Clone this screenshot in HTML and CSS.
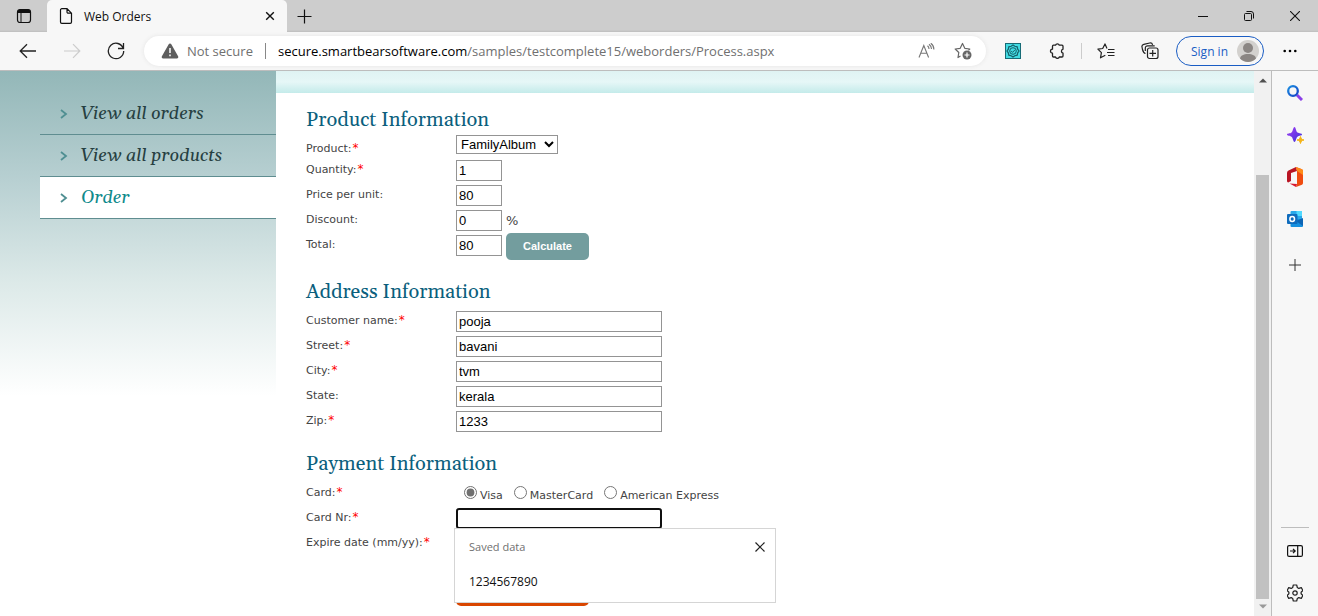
FILE: index.html
```html
<!DOCTYPE html>
<html lang="en">
<head>
<meta charset="utf-8">
<title>Web Orders</title>
<link rel="stylesheet" href="styles.css">
</head>
<body>
<div class="browser">
  <header class="tabstrip">
    <button class="tab-actions" aria-label="Tab actions"><svg width="16" height="16" viewBox="0 0 16 16"><rect x="1.5" y="1.5" width="13" height="13" rx="2.5" fill="none" stroke="#111" stroke-width="1.2"/><path d="M1.5 5V4a2.5 2.5 0 0 1 2.5-2.500h8A2.500 2.500 0 0 1 14.500 4v1z" fill="#111"/><path d="M5 5v9.500" stroke="#111"/></svg></button>
    <div class="tab">
      <svg width="14" height="16" viewBox="0 0 14 16"><path d="M1.500 2a1.300 1.300 0 0 1 1.300-1.300H8L12.500 5.200V14a1.300 1.300 0 0 1-1.300 1.300H2.800A1.300 1.300 0 0 1 1.500 14zM8 .7V4a1.200 1.200 0 0 0 1.200 1.200h3.300" fill="none" stroke="#111" stroke-width="1.2"/></svg>
      <span class="tab-title">Web Orders</span>
      <button class="tab-close" aria-label="Close tab"><svg width="10" height="10" viewBox="0 0 10 10"><path d="M1.200 1.200l7.600 7.600M8.800 1.200L1.200 8.800" stroke="#111" stroke-width="1.400"/></svg></button>
    </div>
    <button class="new-tab" aria-label="New tab"><svg width="15" height="15" viewBox="0 0 15 15"><path d="M7.500 .5v14M.5 7.500h14" stroke="#111" stroke-width="1.200"/></svg></button>
    <div class="window-controls">
      <button aria-label="Minimize"><svg width="10" height="10" viewBox="0 0 10 10"><path d="M0 5.500h10" stroke="#111"/></svg></button>
      <button aria-label="Restore"><svg width="10" height="10" viewBox="0 0 10 10"><rect x=".5" y="2.500" width="7" height="7" rx="1" fill="none" stroke="#111"/><path d="M2.500 .5H7A2.500 2.500 0 0 1 9.500 3v4.500" fill="none" stroke="#111"/></svg></button>
      <button aria-label="Close"><svg width="10" height="10" viewBox="0 0 10 10"><path d="M0 0l10 10M10 0L0 10" stroke="#111" stroke-width="1.100"/></svg></button>
    </div>
  </header>

  <div class="toolbar">
    <button class="tool" aria-label="Back"><svg width="18" height="16" viewBox="0 0 18 16"><path d="M17 8H1.500M8 1.200L1.200 8 8 14.800" fill="none" stroke="#222" stroke-width="1.300"/></svg></button>
    <button class="tool" aria-label="Forward"><svg width="18" height="16" viewBox="0 0 18 16"><path d="M1 8h15.500M10 1.200L16.800 8 10 14.800" fill="none" stroke="#ccc" stroke-width="1.200"/></svg></button>
    <button class="tool" aria-label="Refresh"><svg width="18" height="18" viewBox="0 0 18 18"><path d="M16.300 6.500A7.700 7.700 0 1 0 16.700 9M16.500 1v5.500H11" fill="none" stroke="#222" stroke-width="1.300"/></svg></button>
    <div class="address">
      <svg width="18" height="16" viewBox="0 0 18 16"><path d="M9 .5c.6 0 1 .3 1.300.8l6.800 12c.6 1-.1 2.200-1.200 2.200H2.100c-1.100 0-1.800-1.200-1.200-2.200l6.800-12C8 .8 8.400.5 9 .5z" fill="#5e5e5e"/><path d="M9 5v5M9 11.500v1.700" stroke="#fff" stroke-width="1.500"/></svg>
      <span class="not-secure">Not secure</span>
      <span class="url"><b>secure.smartbearsoftware.com</b>/samples/testcomplete15/weborders/Process.aspx</span>
      <button class="in-address" aria-label="Read aloud"><svg width="18" height="16" viewBox="0 0 18 16"><path d="M1 14.500L5.800 2.500l4.800 12M2.700 10.300h6.200M9.500 2.800c1 .8 1.500 2 1.500 3.200M11 1.200c1.700 1.200 2.500 3 2.500 4.800M12.800.2C15 1.800 15.900 4 15.900 6.500" fill="none" stroke="#777" stroke-width="1.100"/></svg></button>
      <button class="in-address" aria-label="Add to favorites"><svg width="18" height="18" viewBox="0 0 18 18"><path d="M6.500 14.100L4 15.500l.8-5L1.200 7l5-.7L8.500 1.500l2.300 4.800 5 .7-1.300 1.300" fill="none" stroke="#666" stroke-width="1.200" stroke-linejoin="round"/><circle cx="13" cy="13" r="4.500" fill="#666"/><path d="M13 10.500v5M10.500 13h5" stroke="#fff" stroke-width="1.200"/></svg></button>
    </div>
    <button class="tool first-ext" aria-label="Extension"><svg width="16" height="16" viewBox="0 0 16 16"><rect x=".5" y=".5" width="15" height="15" fill="#42dbe2" stroke="#176b76"/><path d="M8 2l1.800 1.300 2.400.5.500 2.400L14 8l-1.300 1.800-.5 2.400-2.400.5L8 14l-1.800-1.300-2.400-.5-.5-2.400L2 8l1.300-1.800.5-2.400 2.400-.5z" fill="none" stroke="#17616c" stroke-width="1.200"/><circle cx="8" cy="8" r="3.300" fill="none" stroke="#17616c"/><path d="M6.200 8l1.300 1.400L10 6.800" fill="none" stroke="#17616c"/></svg></button>
    <button class="tool" aria-label="Extensions"><svg width="16" height="16" viewBox="0 0 16 16"><path d="M4.500 2.200h2A2 2 0 0 1 10.300 2.200H13q1 0 1 1V6.200a2 2 0 0 0 0 3.900V13q0 1-1 1h-2.700a2 2 0 0 1-3.800 0H4.500q-1 0-1-1v-2.800a2 2 0 1 1 0-4V3.200q0-1 1-1z" fill="none" stroke="#222" stroke-width="1.300" stroke-linejoin="round"/></svg></button>
    <span class="tool-divider"></span>
    <button class="tool" aria-label="Favorites"><svg width="18" height="16" viewBox="0 0 18 16"><path d="M10 5.500L8 .9 5.700 5.500.9 6.200 4.400 9.700l-.9 5.100 4.800-2.500M11 6.500h6.500M10 9.500h7.500M11 12.500h6.500" fill="none" stroke="#222" stroke-width="1.200" stroke-linejoin="round"/></svg></button>
    <button class="tool" aria-label="Collections"><svg width="18" height="18" viewBox="0 0 18 18"><rect x="6.500" y="6" width="10.500" height="10.500" rx="2" fill="none" stroke="#222" stroke-width="1.200"/><path d="M11.700 8v6.500M8.500 11.300H15M4.500 11.500C2.500 11 2 9.500 1.500 7.500L1 5c-.3-1.500.5-2.400 1.800-2.700L8.700 1c1.500-.3 2.500.3 2.900 1.800M4.300 9V6.200C4.300 4.700 5.300 3.800 6.700 3.800h7" fill="none" stroke="#222" stroke-width="1.200"/></svg></button>
    <button class="sign-in">Sign in <svg width="22" height="22" viewBox="0 0 22 22"><circle cx="11" cy="11" r="11" fill="#d3d1ce"/><circle cx="11" cy="8" r="5" fill="#8b8683"/><path d="M3 18.500c.5-3 3.500-4.500 8-4.500s7.500 1.500 8 4.500a11 11 0 0 1-16 0z" fill="#8b8683"/></svg></button>
    <button class="tool" aria-label="Settings and more"><svg width="14" height="4" viewBox="0 0 14 4"><circle cx="1.700" cy="2" r="1.300"/><circle cx="7" cy="2" r="1.300"/><circle cx="12.300" cy="2" r="1.300"/></svg></button>
  </div>

  <div class="workspace">
    <div class="page">
      <nav class="menu">
        <ul>
          <li><a href="#"><svg width="8" height="10" viewBox="0 0 8 10"><path d="M1 1l5 4-5 4" fill="none" stroke="#4f8f92" stroke-width="1.800"/></svg>View all orders</a></li>
          <li><a href="#"><svg width="8" height="10" viewBox="0 0 8 10"><path d="M1 1l5 4-5 4" fill="none" stroke="#4f8f92" stroke-width="1.800"/></svg>View all products</a></li>
          <li class="current"><a href="#"><svg width="8" height="10" viewBox="0 0 8 10"><path d="M1 1l5 4-5 4" fill="none" stroke="#4f8f92" stroke-width="1.800"/></svg>Order</a></li>
        </ul>
      </nav>
      <main class="content">
        <div class="band"></div>
        <form class="order">
          <section class="product">
            <h2>Product Information</h2>
            <div class="row select-row"><label for="product">Product:<em>*</em></label><div class="field"><select id="product"><option>FamilyAlbum</option></select></div></div>
            <div class="row"><label for="qty">Quantity:<em>*</em></label><div class="field"><input class="short" id="qty" type="text" value="1"></div></div>
            <div class="row"><label for="price">Price per unit:</label><div class="field"><input class="short" id="price" type="text" value="80"></div></div>
            <div class="row"><label for="discount">Discount:</label><div class="field"><input class="short" id="discount" type="text" value="0"><span class="percent">%</span></div></div>
            <div class="row"><label for="total">Total:</label><div class="field"><input class="short" id="total" type="text" value="80"><button type="button" class="calculate">Calculate</button></div></div>
          </section>
          <section class="address-info">
            <h2>Address Information</h2>
            <div class="row"><label for="name">Customer name:<em>*</em></label><div class="field"><input id="name" type="text" value="pooja"></div></div>
            <div class="row"><label for="street">Street:<em>*</em></label><div class="field"><input id="street" type="text" value="bavani"></div></div>
            <div class="row"><label for="city">City:<em>*</em></label><div class="field"><input id="city" type="text" value="tvm"></div></div>
            <div class="row"><label for="state">State:</label><div class="field"><input id="state" type="text" value="kerala"></div></div>
            <div class="row"><label for="zip">Zip:<em>*</em></label><div class="field"><input id="zip" type="text" value="1233"></div></div>
          </section>
          <section class="payment">
            <h2>Payment Information</h2>
            <div class="row"><span class="caption">Card:<em>*</em></span><div class="field cards">
              <input type="radio" name="card" id="visa" checked><label for="visa">Visa</label>
              <input type="radio" name="card" id="mc"><label for="mc">MasterCard</label>
              <input type="radio" name="card" id="amex"><label for="amex">American Express</label>
            </div></div>
            <div class="row"><label for="cardnr">Card Nr:<em>*</em></label><div class="field">
              <input class="focused" id="cardnr" type="text">
              <div class="autofill">
                <div class="autofill-head">Saved data<button type="button" aria-label="Close suggestions"><svg width="10" height="10" viewBox="0 0 10 10"><path d="M.5 .5l9 9M9.500 .5l-9 9" stroke="#222" stroke-width="1.200"/></svg></button></div>
                <div class="suggestion">1234567890</div>
              </div>
            </div></div>
            <div class="row"><span class="caption">Expire date (mm/yy):<em>*</em></span></div>
          </section>
          <button type="button" class="process" aria-label="Submit order"></button>
        </form>
      </main>
    </div>
    <div class="scrollbar">
      <svg width="8" height="5" viewBox="0 0 8 5"><path d="M0 4.500L4 .5l4 4z" fill="#505050"/></svg>
      <div class="track"><div class="thumb"></div></div>
      <svg width="8" height="5" viewBox="0 0 8 5"><path d="M0 .5h8l-4 4z" fill="#999"/></svg>
    </div>
    <aside class="sidebar">
      <button aria-label="Search"><svg width="16" height="16" viewBox="0 0 16 16"><defs><linearGradient id="lens" x1="0" y1="0" x2="1" y2="1"><stop offset="0" stop-color="#1b8de0"/><stop offset="1" stop-color="#1443c8"/></linearGradient></defs><path d="M10 10l5 5" stroke="#8b3fe8" stroke-width="3"/><circle cx="6" cy="6" r="4.800" fill="none" stroke="url(#lens)" stroke-width="2.300"/></svg></button>
      <button aria-label="Discover"><svg width="18" height="18" viewBox="0 0 18 18"><defs><linearGradient id="spark" x1="0" y1="0" x2="1" y2="1"><stop offset="0" stop-color="#a53df5"/><stop offset="1" stop-color="#3a35d8"/></linearGradient></defs><path d="M8.500 1c1.400 0 1.400 4.500 3 5.600S16 7.300 16 8.500s-3 1-4.500 2.300-1.600 5.200-3 5.200-1.500-4-3-5.200S1 9.700 1 8.500s3-.8 4.500-2S7.100 1 8.500 1z" fill="url(#spark)"/><path d="M14.500 10.500c.6 2.400 1.100 2.900 3.500 3.500-2.400.6-2.900 1.100-3.500 3.500-.6-2.400-1.100-2.900-3.500-3.500 2.400-.6 2.900-1.100 3.500-3.500z" fill="#f5b416" stroke="#f5b416"/></svg></button>
      <button aria-label="Microsoft 365"><svg width="16" height="20" viewBox="0 0 16 20"><path d="M9 0L1.500 3.500Q0 4.300 0 6v8q0 1.200 1.200 1.500L4 14V6l6-2z" fill="#b91524"/><path d="M9 0l6 2.300Q16 2.800 16 4v12q0 1.200-1 1.700L9 20l1-3V4z" fill="#f04c10"/><path d="M9 0l6 2.300Q16 2.800 16 4v4l-6-4z" fill="#ff8b18"/><path d="M2.500 16.500L10 17l-1 3z" fill="#d81b30"/></svg></button>
      <button aria-label="Outlook"><svg width="16" height="16" viewBox="0 0 16 16"><path d="M4.500 0H14q1 0 1 1v8H3.500V1q0-1 1-1z" fill="#28a8ea"/><path d="M9.500 0H15v5H9.500z" fill="#50d9ff"/><path d="M3.500 8H16v7q0 1-1 1H4.500q-1 0-1-1z" fill="#1590df"/><path d="M16 7v8L9 10z" fill="#0d65b5"/><rect y="3" width="10.500" height="10" rx="1" fill="#0f6cbd"/><ellipse cx="5.200" cy="8" rx="2.300" ry="2.500" fill="none" stroke="#fff" stroke-width="1.500"/></svg></button>
      <button class="add" aria-label="Customize"><svg width="12" height="12" viewBox="0 0 12 12"><path d="M6 0v12M0 6h12" stroke="#333"/></svg></button>
      <hr>
      <button aria-label="Hide sidebar"><svg width="16" height="12" viewBox="0 0 16 12"><rect x=".6" y=".6" width="14.800" height="10.800" rx="1.500" fill="none" stroke="#111" stroke-width="1.200"/><path d="M10.700 .5v11M3 6h5M6 3.800L8.200 6 6 8.200" fill="none" stroke="#111" stroke-width="1.200"/></svg></button>
      <button aria-label="Settings"><svg width="16" height="18" viewBox="0 0 16 18"><path d="M6.300 1h3.400l.6 2.500 1.500.9 2.500-.8 1.600 2.900-1.800 1.700v1.600l1.800 1.700-1.600 2.900-2.500-.8-1.500.9-.6 2.500H6.300l-.6-2.500-1.500-.9-2.500.8L.1 11.500l1.800-1.700V8.200L.1 6.500l1.600-2.900 2.500.8 1.500-.9z" fill="none" stroke="#222" stroke-width="1.200" stroke-linejoin="round"/><circle cx="8" cy="9" r="2.200" fill="none" stroke="#222" stroke-width="1.200"/></svg></button>
    </aside>
  </div>
</div>
</body>
</html>
```
FILE: styles.css
```css
* { box-sizing: border-box; }
body { margin: 0; font-family: "Open Sans", "Noto Sans", sans-serif; font-size: 12px; color: #111; background: #fff; }
button { padding: 0; border: 0; background: none; font: inherit; }
svg { display: block; flex: none; }
.browser { height: 100vh; display: flex; flex-direction: column; overflow: hidden; background: #f7f7f7; }

/* Tab strip */
.tabstrip { display: flex; height: 32px; background: linear-gradient(#cdcdcd 30px, #bdbdbd 32px); }
.tabstrip button { display: flex; align-items: center; justify-content: center; }
.tab-actions { width: 47px; }
.tab { display: flex; align-items: center; gap: 11px; width: 240px; padding: 0 12px; background: #f7f7f7; border-radius: 5px 5px 0 0; }
.tab-title { flex: 1; }
.new-tab { width: 35px; }
.window-controls { display: flex; margin-left: auto; }
.window-controls button { width: 46px; }

/* Toolbar */
.toolbar { display: flex; align-items: center; height: 39px; padding: 0 6px; border-bottom: 1px solid #bdbdbd; }
.tool { display: flex; align-items: center; justify-content: center; width: 44px; height: 30px; }
.address { flex: 1; display: flex; align-items: center; min-width: 0; height: 30px; margin-left: 6px; padding: 0 5px 0 17px; border-radius: 15px; background: #fff; box-shadow: 0 0 4px #e4e4e4; font-size: 13px; color: #707070; }
.not-secure { margin-left: 8px; padding-right: 12px; border-right: 1px solid #888; line-height: 16px; }
.url { flex: 1; margin-left: 12px; white-space: nowrap; overflow: hidden; }
.url b { font-weight: 400; color: #000; }
.in-address { display: flex; justify-content: center; width: 36px; }
.first-ext { margin-left: 5px; }
.tool-divider { width: 1px; height: 16px; margin: 0 2px; background: #ccc; }
.sign-in { display: flex; align-items: center; justify-content: space-between; width: 88px; height: 30px; margin: 0 4px; padding: 0 4px 0 14px; border: 1px solid #1a5dc4; border-radius: 15px; color: #1a5dc4; }

/* Workspace */
.workspace { flex: 1; display: flex; min-height: 0; }
.page { flex: 1; display: flex; min-width: 0; overflow: hidden; background: #fff; }
.menu { width: 276px; padding: 22px 0 0 40px; background: linear-gradient(#93b7b8, #b8d0d2 110px, #dce9e8 210px, #fff 325px); }
.menu ul { margin: 0; padding: 0; list-style: none; }
.menu li { border-bottom: 1px solid #5f8d90; }
.menu a { display: flex; align-items: center; gap: 13px; height: 41px; padding-left: 20px; font: italic 18px Georgia, Gelasio, "Liberation Serif", serif; color: #263f41; text-decoration: none; }
.menu .current { background: #fff; }
.menu .current a { color: #0f8a8c; }
.content { flex: 1; min-width: 0; }
.band { height: 22px; background: linear-gradient(#dff3f3, #e6f7f7 50%, #c4ebea); }

/* Order form */
.order { padding: 14px 30px 0; font-family: Verdana, "DejaVu Sans", sans-serif; font-size: 11px; color: #444; }
h2 { margin: 0; font: 20px/26px Georgia, Gelasio, "Liberation Serif", serif; color: #0b5f7d; }
.address-info { padding-top: 21px; }
.payment { padding-top: 17px; }
.address-info h2, .payment h2 { margin-bottom: 4px; }
.row { display: flex; height: 25px; line-height: 24px; }
.row > label, .caption { width: 150px; white-space: nowrap; }
.row em { margin-left: 1px; font-size: 12px; font-style: normal; line-height: 1; color: #f00; }
.select-row { padding-top: 2px; line-height: 28px; }
.field { position: relative; display: flex; align-items: flex-start; padding-top: 2px; }
.select-row .field { padding-top: 0; }
select, input[type="text"] { font: 13px Arial, "Liberation Sans", sans-serif; color: #000; background: #fff; border: 1px solid #949494; border-radius: 0; }
select { height: 19px; width: 102px; padding: 0; }
input[type="text"] { width: 206px; height: 21px; padding: 1px 2px; }
input[type="text"].short { width: 46px; }
input[type="text"].focused { border: 2px solid #101010; border-radius: 3px; outline: 0; }
.percent { margin-left: 4px; font-size: 13px; line-height: 22px; }
.calculate { width: 83px; height: 27px; margin: -2px 0 0 4px; padding-bottom: 2px; border-radius: 5px; background: #739d9e; color: #fff; font: bold 11px Arial, "Liberation Sans", sans-serif; }
.cards { padding: 3px 0 0 8px; }
.cards input { width: 13px; height: 13px; margin: 2px 3px 0 0; accent-color: #707070; }
.cards label { margin-right: 11px; }
.autofill { position: absolute; z-index: 1; top: 22px; left: -2px; width: 322px; height: 75px; padding: 0 10px 0 14px; border: 1px solid #d5d5d5; background: #fff; font-family: "Open Sans", "Noto Sans", sans-serif; color: #111; }
.autofill-head { display: flex; justify-content: space-between; align-items: center; height: 36px; color: #707070; }
.autofill-head button { padding: 0; }
.suggestion { font-size: 12px; line-height: 34px; }
.process { display: block; width: 133px; height: 27px; margin: 23px 0 0 150px; border-radius: 5px; background: #d94600; }

/* Scrollbar */
.scrollbar { display: flex; flex-direction: column; align-items: center; width: 17px; padding: 7px 0; background: #f1f1f1; }
.track { flex: 1; width: 13px; margin: 5px 0; padding-top: 87px; }
.thumb { height: 100%; background: #c1c1c1; }

/* Sidebar */
.sidebar { display: flex; flex-direction: column; align-items: center; width: 47px; padding-top: 1px; border-left: 1px solid #bdbdbd; }
.sidebar button { display: flex; align-items: center; justify-content: center; width: 42px; height: 42px; }
.sidebar .add { margin-top: 4px; }
.sidebar hr { width: 28px; margin: auto 0 2px; border: 0; border-top: 1px solid #bdbdbd; }
.sidebar button:last-child { margin-bottom: 2px; }
```
